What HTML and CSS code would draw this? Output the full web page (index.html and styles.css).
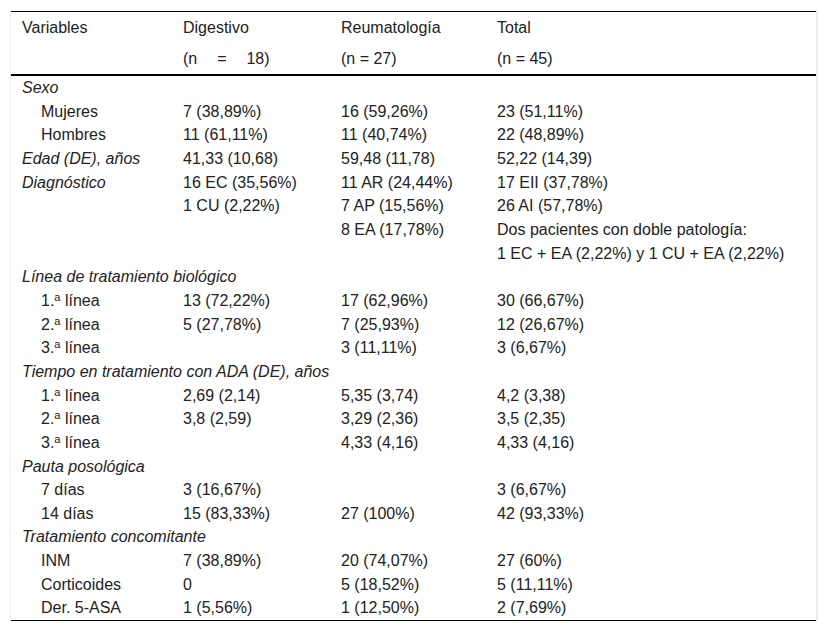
FILE: index.html
```html
<!DOCTYPE html>
<html lang="es">
<head>
<meta charset="utf-8">
<title>Tabla</title>
<link rel="stylesheet" href="styles.css">
</head>
<body>
<div class="wrap">
<table class="data">
<colgroup>
<col class="c1"><col class="c2"><col class="c3"><col class="c4">
</colgroup>
<thead>
<tr class="h1"><th>Variables</th><th>Digestivo</th><th>Reumatología</th><th>Total</th></tr>
<tr class="h2"><th></th><th><span class="just">(n = 18)</span></th><th>(n = 27)</th><th>(n = 45)</th></tr>
</thead>
<tbody>
<tr><td class="sec" colspan="4">Sexo</td></tr>
<tr><td class="sub">Mujeres</td><td>7 (38,89%)</td><td>16 (59,26%)</td><td>23 (51,11%)</td></tr>
<tr><td class="sub">Hombres</td><td>11 (61,11%)</td><td>11 (40,74%)</td><td>22 (48,89%)</td></tr>
<tr><td class="sec">Edad (DE), años</td><td>41,33 (10,68)</td><td>59,48 (11,78)</td><td>52,22 (14,39)</td></tr>
<tr><td class="sec">Diagnóstico</td><td>16 EC (35,56%)</td><td>11 AR (24,44%)</td><td>17 EII (37,78%)</td></tr>
<tr><td></td><td>1 CU (2,22%)</td><td>7 AP (15,56%)</td><td>26 AI (57,78%)</td></tr>
<tr><td></td><td></td><td>8 EA (17,78%)</td><td>Dos pacientes con doble patología:</td></tr>
<tr><td></td><td></td><td></td><td>1 EC + EA (2,22%) y 1 CU + EA (2,22%)</td></tr>
<tr><td class="sec" colspan="4">Línea de tratamiento biológico</td></tr>
<tr><td class="sub">1.<sup>a</sup> línea</td><td>13 (72,22%)</td><td>17 (62,96%)</td><td>30 (66,67%)</td></tr>
<tr><td class="sub">2.<sup>a</sup> línea</td><td>5 (27,78%)</td><td>7 (25,93%)</td><td>12 (26,67%)</td></tr>
<tr><td class="sub">3.<sup>a</sup> línea</td><td></td><td>3 (11,11%)</td><td>3 (6,67%)</td></tr>
<tr><td class="sec" colspan="4">Tiempo en tratamiento con ADA (DE), años</td></tr>
<tr><td class="sub">1.<sup>a</sup> línea</td><td>2,69 (2,14)</td><td>5,35 (3,74)</td><td>4,2 (3,38)</td></tr>
<tr><td class="sub">2.<sup>a</sup> línea</td><td>3,8 (2,59)</td><td>3,29 (2,36)</td><td>3,5 (2,35)</td></tr>
<tr><td class="sub">3.<sup>a</sup> línea</td><td></td><td>4,33 (4,16)</td><td>4,33 (4,16)</td></tr>
<tr><td class="sec" colspan="4">Pauta posológica</td></tr>
<tr><td class="sub">7 días</td><td>3 (16,67%)</td><td></td><td>3 (6,67%)</td></tr>
<tr><td class="sub">14 días</td><td>15 (83,33%)</td><td>27 (100%)</td><td>42 (93,33%)</td></tr>
<tr><td class="sec" colspan="4">Tratamiento concomitante</td></tr>
<tr><td class="sub">INM</td><td>7 (38,89%)</td><td>20 (74,07%)</td><td>27 (60%)</td></tr>
<tr><td class="sub">Corticoides</td><td>0</td><td>5 (18,52%)</td><td>5 (11,11%)</td></tr>
<tr class="last"><td class="sub">Der. 5-ASA</td><td>1 (5,56%)</td><td>1 (12,50%)</td><td>2 (7,69%)</td></tr>
</tbody>
</table>
</div>
</body>
</html>
```
FILE: styles.css
```css
html, body {
  margin: 0;
  padding: 0;
  background: #ffffff;
}

body {
  font-family: "Liberation Sans", Arial, sans-serif;
  font-size: 16px;
  color: #222222;
}

.wrap {
  margin: 10px 9px 0 10px;
  padding-top: 1px;
  border-left: 1px solid #efefef;
  border-right: 2px solid #ececec;
}

.data {
  width: 100%;
  border-collapse: separate;
  border-spacing: 0;
  table-layout: fixed;
}

.c1 { width: 161px; }
.c2 { width: 158px; }
.c3 { width: 156px; }
.c4 { width: auto; }

.data th,
.data td {
  text-align: left;
  font-weight: normal;
  vertical-align: top;
  padding: 2px 11px;
  line-height: 19.65px;
  white-space: nowrap;
}

.data thead th {
  padding-top: 6px;
  padding-bottom: 6px;
  line-height: 19px;
}

.data .h1 th {
  border-top: 1px solid #000000;
}

.data .h2 th {
  border-bottom: 2px solid #000000;
}

.data .last td {
  border-bottom: 1px solid #000000;
}

.sec {
  font-style: italic;
}

.data td.sub {
  padding-left: 30px;
}

.just {
  word-spacing: 15.5px;
}

sup {
  font-size: 11px;
  line-height: 0;
  vertical-align: 5px;
}
```
